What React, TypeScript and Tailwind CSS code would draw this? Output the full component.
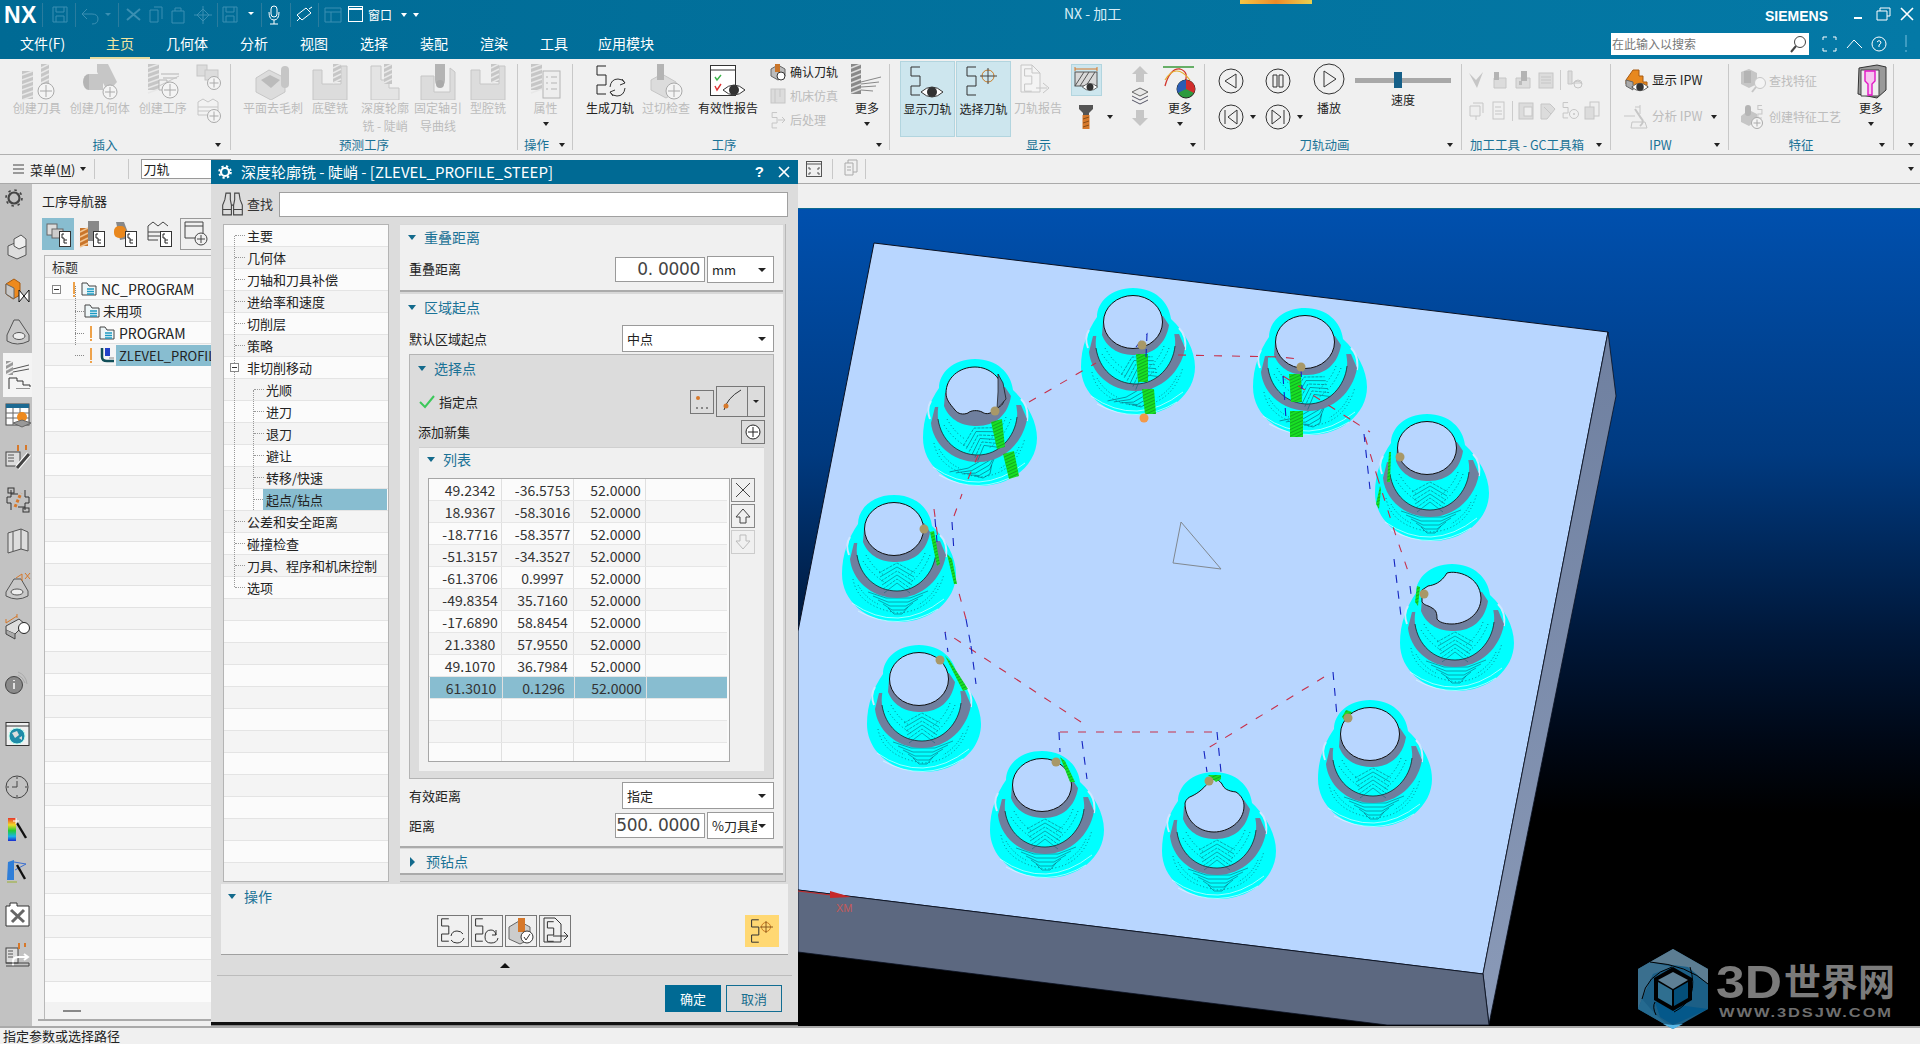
import React from "react";

const G = "#c6c6c6";
const GD = "#b4b4b4";
const GL = "#dcdcdc";

function S({ w = 32, h = 32, vb, children, className = "" }: any) {
  return (
    <svg width={w} height={h} viewBox={vb || `0 0 ${w} ${h}`} fill="none" className={"block shrink-0 " + className}>
      {children}
    </svg>
  );
}

const Caret = ({ dark = "border-t-[#222]" }: any) => (
  <span className={"inline-block w-0 h-0 border-x-[3px] border-x-transparent border-t-[4px] " + dark} />
);

const Tp = ({ x = 0, y = 0, c = "#333", k = 1 }: any) => (
  <path transform={`translate(${x} ${y}) scale(${k})`} d="M11 1H2V10H11V20H2V29H11" stroke={c} strokeWidth={1 / k} fill="none" />
);
const Plus = ({ cx, cy, r = 7, c = "#aaa" }: any) => (
  <g>
    <circle cx={cx} cy={cy} r={r} fill="#f4f4f4" stroke={c} />
    <path d={`M${cx - r + 2} ${cy}H${cx + r - 2}M${cx} ${cy - r + 2}V${cy + r - 2}`} stroke={c} />
  </g>
);
const Eye = ({ cx, cy, c = "#333", k = 1 }: any) => (
  <g transform={`translate(${cx} ${cy}) scale(${k})`}>
    <path d="M-11 0Q0 -10 11 0Q0 10 -11 0Z" fill="#fff" stroke={c} />
    <circle r="5" fill={c} />
  </g>
);
const Hatch = ({ x, y, w, h, a = G, b = "#e8e8e8" }: any) => {
  const ls = [];
  for (let i = 0; i < h; i += 5) ls.push(<path key={i} d={`M${x} ${y + i + 4}L${x + w} ${y + i}`} stroke={b} strokeWidth="1.5" />);
  return (
    <g>
      <rect x={x} y={y} width={w} height={h} fill={a} />
      {ls}
    </g>
  );
};
const Step = ({ x = 0, y = 0, c = GD, fill = "#e4e4e4" }: any) => (
  <path transform={`translate(${x} ${y})`} d="M1 1H11V15H19V23H29V35H1Z" fill={fill} stroke={c} />
);

/* ---------- Title bar ---------- */
function Qat() {
  const c = "#3a8fb2";
  return (
    <div className="flex items-center h-[30px] text-white">
      <div className="w-[42px] pl-[4px] text-[23px] font-bold leading-none font-['Liberation_Sans',sans-serif] tracking-[0.5px]">NX</div>
      <svg width="372" height="30" viewBox="42 0 372 30" fill="none" className="block shrink-0">
        <g stroke={c}>
          <path d="M42.5 3V27M75.5 3V27M118.5 3V27M217.5 3V27M261.5 3V27M290.5 3V27M318.5 3V27" stroke="#2a7c9e" />
          <path d="M53 7H67V22H53ZM56 7V12H64V7M56 22V16H64V22" />
          <path d="M82 14H92Q98 14 98 19Q98 24 92 24M82 14L87 9M82 14L87 19" />
          <path d="M127 20L140 9M127 9L140 20" strokeWidth="2" />
          <path d="M150 10H158V22H150ZM154 7H162V19" />
          <path d="M172 11H184V23H172ZM175 11V8H181V11" />
          <path d="M197 15L203 9L209 15L203 21ZM203 6V24M194 15H212" />
          <path d="M223 7H237V22H223ZM226 7V12H234V7M226 22V16H234V22" />
        </g>
        <path d="M105 13H111L108 16Z" fill={c} />
        <path d="M248 12H254L251 15Z" fill="#fff" />
        <g stroke="#fff">
          <rect x="271" y="6" width="6" height="11" rx="3" />
          <path d="M269 12Q269 20 274 20Q279 20 279 12M274 20V24M270 24H278" />
          <path d="M297 15L306 8L311 13L302 20ZM300 18L297 21M309 9L312 7" />
        </g>
        <path d="M325 8H341V22H325ZM325 12H341M331 12V22" stroke={c} />
        <rect x="348.5" y="6.5" width="14" height="15" stroke="#fff" />
        <path d="M349 9H362" stroke="#fff" strokeWidth="2" />
      </svg>
    </div>
  );
}

function TitleBar() {
  const tabs = ["视图", "选择", "装配", "渲染", "工具"];
  return (
    <div className="relative h-[59px] shrink-0 bg-linear-to-r from-[#006a94] to-[#0479a6] text-white">
      <div className="flex items-start justify-between h-[30px]">
        <div className="flex items-center">
          <Qat />
          <span className="-ml-[46px] text-[12px] leading-none">窗口</span>
          <span className="ml-[9px] flex"><Caret dark="border-t-white" /></span>
          <span className="ml-[6px] flex"><Caret dark="border-t-white" /></span>
        </div>
        <div className="absolute left-[1064px] top-[3px] text-[14px] leading-[20px] text-[#d8eef7] whitespace-pre">NX - 加工</div>
        <div className="absolute left-[1240px] top-0 w-[72px] h-[4px] bg-linear-to-r from-[#f6c644] via-[#ee8a28] to-[#e8d050]" />
        <div className="flex items-center h-[30px]">
          <span className="text-[14px] font-bold font-['Liberation_Sans',sans-serif] mt-[2px]">SIEMENS</span>
          <svg width="92" height="30" viewBox="0 0 92 30" fill="none" className="block">
            <path d="M26 18H34" stroke="#fff" strokeWidth="2" />
            <path d="M49 11H59V20H49ZM52 11V8H62V16H59" stroke="#fff" />
            <path d="M73 8L85 20M85 8L73 20" stroke="#fff" strokeWidth="1.6" />
          </svg>
        </div>
      </div>
      <div className="flex items-center h-[29px] justify-between -mt-[1px]">
        <div className="flex items-center text-[14px] leading-[29px]">
          <div className="w-[90px] pl-[20px]">文件(F)</div>
          <div className="relative w-[60px] text-center text-[#f2e6a0]">
            主页
            <div className="absolute left-0 right-0 -bottom-[1px] h-[2px] bg-[#e6dca0]" />
          </div>
          <div className="w-[74px] text-center">几何体</div>
          <div className="w-[60px] text-center">分析</div>
          {tabs.map((t) => (
            <div key={t} className="w-[60px] text-center">{t}</div>
          ))}
          <div className="ml-[14px]">应用模块</div>
        </div>
        <div className="flex items-center">
          <div className="flex items-center justify-between w-[198px] h-[22px] bg-white pl-[1px] pr-[2px] text-[12px] text-[#777]">
            <span>在此输入以搜索</span>
            <svg width="18" height="20" viewBox="0 0 18 20" fill="none" className="block">
              <circle cx="11" cy="8" r="5.5" stroke="#444" />
              <path d="M7 12L2 18" stroke="#444" strokeWidth="2" />
            </svg>
          </div>
          <svg width="111" height="24" viewBox="1809 31 111 24" fill="none" className="block">
            <path d="M1823 39V36H1827M1833 36H1836V39M1836 47V50H1833M1827 50H1823V47" stroke="#fff" />
            <path d="M1847 47L1854 39L1862 47" stroke="#fff" />
            <circle cx="1879" cy="43" r="7" stroke="#fff" />
            <path d="M1877 41Q1879 38 1881 41Q1881 43 1879 44V46" stroke="#fff" />
            <path d="M1906 34V46M1906 49V51" stroke="#3d9cc2" strokeWidth="2" />
          </svg>
        </div>
      </div>
    </div>
  );
}

/* ---------- Ribbon ---------- */
function Group({ w, label, lc = "", caret = true, children, className = "", caretRight = 8 }: any) {
  return (
    <div className={"relative shrink-0 h-[86px] my-[5px] border-r border-[#c8c8c8] " + className} style={{ width: w }}>
      <div className="flex h-[72px]">{children}</div>
      <div className={"h-[18px] text-[12.5px] leading-[18px] text-center text-[#1a7296] whitespace-pre " + lc}>{label}</div>
      {caret && (
        <span className="absolute top-[79px] flex" style={{ right: caretRight }}>
          <Caret />
        </span>
      )}
    </div>
  );
}

function Big({ w, label, l2, icon, off = false, caret = false, className = "" }: any) {
  return (
    <div className={"flex flex-col items-center shrink-0 " + className} style={{ width: w }}>
      <div className="h-[35px] flex items-start justify-center">{icon}</div>
      <div className={"text-[12px] leading-[18px] whitespace-nowrap " + (off ? "text-[#bcbcbc]" : "text-[#222]")}>{label}</div>
      {l2 && <div className={"text-[12px] leading-[17px] whitespace-nowrap " + (off ? "text-[#bcbcbc]" : "text-[#222]")}>{l2}</div>}
      {caret && <div className="flex h-[14px] items-center"><Caret /></div>}
    </div>
  );
}

const IconCreateTool = (
  <S w={36} h={36}>
    <Hatch x={3} y={7} w={11} h={28} />
    <Hatch x={22} y={0} w={8} h={24} />
    <Plus cx={27} cy={27} r={8} />
  </S>
);
const IconCreateGeom = (
  <S w={36} h={36}>
    <path d="M15 0L26 0L35 18L26 28L15 8Z" fill={G} />
    <ellipse cx="7" cy="18" rx="6" ry="8" fill={GD} />
    <rect x="7" y="10" width="14" height="16" fill={G} />
    <Plus cx={28} cy={28} r={7} />
  </S>
);
const IconCreateOp = (
  <S w={36} h={36}>
    <Hatch x={3} y={0} w={11} h={26} />
    <path d="M14 16H22V26H14ZM16 10H34M18 14H32" stroke={GD} />
    <path d="M14 22L34 12" stroke={G} />
    <Plus cx={25} cy={26} r={8} />
  </S>
);
const IconDeburr = (
  <S w={36} h={36}>
    <path d="M1 14L14 6L30 14V28L16 36L1 28Z" fill={GL} stroke={G} />
    <path d="M6 16L15 11L25 16L16 24Z" fill="#bbb" />
    <rect x="26" y="2" width="8" height="22" rx="4" fill={G} />
  </S>
);
const IconFloor = (
  <S w={36} h={36}>
    <path d="M1 6H10V20H29V2H35V36H1Z" fill={GL} stroke={G} />
    <Hatch x={21} y={0} w={8} h={18} />
  </S>
);
const IconZlevel = (
  <S w={36} h={36}>
    <Step x={3} y={1} c={G} />
    <Hatch x={17} y={0} w={8} h={20} />
  </S>
);
const IconGuide = (
  <S w={36} h={36}>
    <path d="M1 12H14V28H30V4L35 8V36H1Z" fill={GL} stroke={G} />
    <path d="M15 0V16Q15 22 20 22Q25 22 25 16V0Z" fill={GD} />
    <circle cx="20" cy="20" r="4" fill="#aaa" />
  </S>
);
const IconProps = (
  <S w={36} h={36}>
    <Hatch x={3} y={0} w={11} h={26} />
    <rect x="15" y="7" width="17" height="27" fill="#eee" stroke={GD} />
    <path d="M18 13H20M23 13H29M18 19H20M23 19H29M18 25H20M23 25H29" stroke={GD} />
  </S>
);
const IconGen = (
  <S w={36} h={36}>
    <Tp x={3} y={1} c="#222" />
    <path d="M18 23Q19 15 26 15Q31 15 33 19M33 24Q32 32 25 32Q20 32 18 28" stroke="#333" />
    <path d="M30 15L33 19L28 21M21 32L18 28L23 26" stroke="#333" />
  </S>
);
const IconGouge = (
  <S w={36} h={36}>
    <path d="M3 16L14 10L28 18V28L18 34L3 26Z" fill={GL} stroke={G} />
    <rect x="9" y="0" width="7" height="16" fill={GD} />
    <Plus cx={26} cy={27} r={8} />
  </S>
);
const IconValid = (
  <S w={36} h={36}>
    <rect x="0.5" y="1.5" width="25" height="30" stroke="#333" fill="#fff" />
    <path d="M1 6H25" stroke="#333" />
    <path d="M5 13L7 16L11 11" stroke="#3cb34a" strokeWidth="1.4" />
    <path d="M5 22L7 26L11 20" stroke="#d33" strokeWidth="1.4" />
    <Eye cx={24} cy={26} />
  </S>
);
const IconMoreMill = (
  <S w={36} h={36}>
    <Hatch x={2} y={0} w={10} h={30} a="#888" b="#ddd" />
    <path d="M12 18L32 13M12 20L30 18M12 23L27 22M12 26L24 27" stroke="#888" />
  </S>
);
const IconShow = (
  <S w={36} h={36}>
    <Tp x={0} y={1} />
    <Eye cx={23} cy={27} />
  </S>
);
const IconSelect = (
  <S w={36} h={36}>
    <Tp x={0} y={1} />
    <circle cx="23" cy="11" r="6" stroke="#c97b25" />
    <path d="M15 11H32M23 3V19" stroke="#444" />
  </S>
);
const IconReport = (
  <S w={36} h={36}>
    <path d="M1 1H12L20 9V28H1Z" fill="#f4f4f4" stroke={G} />
    <path d="M12 1V9H20" stroke={G} />
    <Tp x={3} y={4} c={G} k={0.8} />
    <path d="M16 24H27M23 19L29 24L23 29" stroke={G} />
  </S>
);
const IconTool = (
  <S w={16} h={26}>
    <path d="M1 1H15V5L11 9V12H5V9L1 5Z" fill="#555" />
    <rect x="4.5" y="11" width="7" height="14" fill="#d6782a" />
    <path d="M5 15L11 13M5 19L11 17M5 23L11 21" stroke="#8b4d16" />
  </S>
);
const IconCut = (
  <S w={28} h={28}>
    <rect x="3" y="6" width="22" height="14" fill="#d8d8d8" stroke="#555" />
    <path d="M3 20L12 6M8 20L17 6M14 20L23 6" stroke="#555" />
    <path d="M3 3H25M3 1V5M25 1V5" stroke="#d6782a" />
    <Eye cx={18} cy={21} k={0.7} />
  </S>
);
const IconMoreColor = (
  <S w={36} h={36}>
    <path d="M1 3H32" stroke="#3a9a3a" strokeWidth="1.5" />
    <path d="M3 22Q8 4 18 5Q28 8 22 20" stroke="#d2342c" strokeWidth="1.3" />
    <path d="M3 16Q14 -2 28 16" stroke="#e6b030" strokeWidth="1.2" />
    <circle cx="24" cy="25" r="9" fill="#2c9a3e" stroke="#222" />
    <path d="M24 25V16A9 9 0 0 1 32 29Z" fill="#d22d2d" />
    <path d="M24 25L16 29A9 9 0 0 1 24 16Z" fill="#2b5db5" />
  </S>
);
const Circ = ({ r = 12, kind }: any) => {
  const c = r + 1;
  return (
    <S w={c * 2} h={c * 2}>
      <circle cx={c} cy={c} r={r} stroke="#333" />
      {kind === "prev" && <path d={`M${c + 5} ${c - 7}V${c + 7}L${c - 6} ${c}Z`} stroke="#333" />}
      {kind === "pause" && <path d={`M${c - 5} ${c - 6}H${c - 1}V${c + 6}H${c - 5}ZM${c + 1} ${c - 6}H${c + 5}V${c + 6}H${c + 1}Z`} stroke="#333" />}
      {kind === "first" && <path d={`M${c + 6} ${c - 7}V${c + 7}L${c - 3} ${c}ZM${c - 6} ${c - 7}V${c + 7}`} stroke="#333" />}
      {kind === "last" && <path d={`M${c - 6} ${c - 7}V${c + 7}L${c + 3} ${c}ZM${c + 6} ${c - 7}V${c + 7}`} stroke="#333" />}
      {kind === "play" && <path d={`M${c - 5} ${c - 8}V${c + 8}L${c + 7} ${c}Z`} stroke="#333" />}
    </S>
  );
};
const SmallGray = ({ v }: any) => (
  <S w={18} h={20}>
    {v === 0 && <path d="M1 3L8 10L15 2L9 18Z" fill={G} />}
    {v === 1 && <g><path d="M3 8H15V18H3Z" fill={GL} stroke={G} /><rect x="3" y="2" width="5" height="8" fill={GD} /></g>}
    {v === 2 && <g><path d="M2 8H16V18H2Z" fill={GL} stroke={G} /><rect x="7" y="1" width="6" height="10" fill={GD} /><path d="M5 11H8V15H5Z" fill="#bbb" /></g>}
    {v === 3 && <g><rect x="2" y="3" width="14" height="15" fill={GL} stroke={G} /><path d="M4 7H14M4 10H14M4 13H14" stroke={G} /></g>}
    {v === 4 && <g><path d="M2 1H6V14H2ZM6 14Q12 8 16 14" fill={GL} stroke={G} /><circle cx="12" cy="14" r="4" stroke={G} /></g>}
    {v === 5 && <g><path d="M2 5H12V15H2ZM5 2H15V12" stroke={G} fill="#eee" /><path d="M8 15V19" stroke={G} /></g>}
    {v === 6 && <g><rect x="3" y="1" width="11" height="17" fill="#f0f0f0" stroke={G} /><path d="M5 6H11M5 10H12M5 13H12" stroke={G} /></g>}
    {v === 7 && <g><rect x="2" y="2" width="14" height="16" fill={GL} stroke={G} /><rect x="7" y="6" width="8" height="9" fill="#eee" stroke={G} /></g>}
    {v === 8 && <g><path d="M2 3H11L16 8L8 18H2Z" fill={GL} stroke={G} /><path d="M5 6L12 13" stroke={G} /></g>}
    {v === 9 && <g><Tp x={1} y={1} c={G} k={0.55} /><circle cx="13" cy="13" r="4.5" stroke={G} /><circle cx="13" cy="13" r="1" fill={G} /></g>}
    {v === 10 && <g><rect x="7" y="1" width="9" height="14" fill="#eee" stroke={G} /><rect x="2" y="6" width="9" height="12" fill={GL} stroke={G} /></g>}
  </S>
);

function Ribbon() {
  return (
    <div className="flex h-[96px] shrink-0 bg-[#f0f0f0] border-b border-[#b0b0b0] overflow-hidden">
      <Group w={231} label="插入" lc="pr-[20px]" caretRight={9}>
        <div className="w-[7px]" />
        <Big w={60} off label="创建刀具" icon={IconCreateTool} />
        <Big w={66} off label="创建几何体" icon={IconCreateGeom} />
        <Big w={60} off label="创建工序" icon={IconCreateOp} />
        <div className="w-[38px] flex flex-col gap-[6px] pl-[3px]">
          <S w={26} h={27}>
            <rect x="1" y="1" width="10" height="11" fill={GL} stroke={G} />
            <rect x="9" y="6" width="13" height="10" fill={GL} stroke={G} />
            <Plus cx={18} cy={19} r={6.5} />
          </S>
          <S w={26} h={27}>
            <path d="M2 5L7 2L12 5L17 2L22 5V18H2Z" fill="#f2f2f2" stroke={G} />
            <path d="M2 10H22M2 14H22" stroke={G} />
            <Plus cx={18} cy={19} r={6.5} />
          </S>
        </div>
      </Group>
      <Group w={287} label="预测工序" lc="pr-[20px]" caret={false}>
        <div className="w-[12px]" />
        <Big w={60} off label="平面去毛刺" icon={IconDeburr} />
        <Big w={54} off label="底壁铣" icon={IconFloor} />
        <Big w={56} off label="深度轮廓" l2="铣 - 陡峭" icon={IconZlevel} />
        <Big w={50} off label="固定轴引" l2="导曲线" icon={IconGuide} />
        <Big w={50} off label="型腔铣" icon={IconFloor} />
      </Group>
      <Group w={55} label="操作" lc="pr-[17px]" caretRight={7}>
        <div className="w-[2px]" />
        <Big w={55} off label="属性" icon={IconProps} caret />
      </Group>
      <Group w={317} label="工序" lc="pr-[14px]" caretRight={7}>
        <div className="w-[8px]" />
        <Big w={58} label="生成刀轨" icon={IconGen} />
        <Big w={54} off label="过切检查" icon={IconGouge} />
        <Big w={70} label="有效性报告" icon={IconValid} />
        <div className="w-[87px] pl-[6px] text-[12px] leading-[24px] -mt-[4px]">
          <div className="flex items-center gap-[3px] text-[#222]">
            <S w={18} h={18}>
              <path d="M2 6L9 2L16 6V13L9 17L2 13Z" fill="#bbb" stroke="#666" />
              <rect x="6" y="1" width="5" height="8" fill="#c9752a" />
              <circle cx="12" cy="13" r="4" fill="#fff" stroke="#333" />
            </S>
            确认刀轨
          </div>
          <div className="flex items-center gap-[3px] text-[#bcbcbc]">
            <S w={18} h={18}>
              <rect x="2" y="2" width="14" height="14" fill={GL} stroke={G} />
              <path d="M6 2V16M11 2V10" stroke={G} />
            </S>
            机床仿真
          </div>
          <div className="flex items-center gap-[3px] text-[#bcbcbc]">
            <S w={18} h={18}>
              <Tp x={2} y={1} c={G} k={0.55} />
              <path d="M9 9H16M13 6L16 9L13 12" stroke={G} />
            </S>
            后处理
          </div>
        </div>
        <Big w={34} label="更多" icon={IconMoreMill} caret />
      </Group>
      <Group w={315} label="显示" lc="pr-[17px]" caretRight={8}>
        <div className="w-[10px]" />
        <div className="flex -mt-[3px] h-[76px] gap-[1px]">
          <div className="w-[55px] h-[76px] bg-[#cde6ee] border border-[#b2d5df] flex flex-col items-center pt-[3px]">
            <Big w={53} label="显示刀轨" icon={IconShow} />
          </div>
          <div className="w-[55px] h-[76px] bg-[#cde6ee] border border-[#b2d5df] flex flex-col items-center pt-[3px]">
            <Big w={53} label="选择刀轨" icon={IconSelect} />
          </div>
        </div>
        <Big w={54} off label="刀轨报告" icon={IconReport} />
        <div className="w-[60px] pl-[6px] flex flex-col">
          <div className="w-[31px] h-[32px] bg-[#cde6ee] border border-[#b2d5df] flex items-center justify-center">{IconCut}</div>
          <div className="flex items-center mt-[8px]">
            <div className="w-[31px] flex justify-center">{IconTool}</div>
            <span className="ml-[5px] flex"><Caret /></span>
          </div>
        </div>
        <div className="w-[32px] flex flex-col items-center gap-[4px] pt-[1px]">
          <S w={18} h={18}>
            <path d="M9 1L17 9H13V17H5V9H1Z" fill={G} />
          </S>
          <S w={18} h={18}>
            <path d="M9 1L17 5L9 9L1 5Z" fill="#e8e8e8" stroke="#666" />
            <path d="M1 9L9 13L17 9M1 13L9 17L17 13" stroke="#556" />
          </S>
          <S w={18} h={18}>
            <path d="M5 1H13V9H17L9 17L1 9H5Z" fill={G} />
          </S>
        </div>
        <Big w={48} label="更多" icon={IconMoreColor} caret />
      </Group>
      <Group w={257} label="刀轨动画" lc="pr-[17px]" caretRight={8}>
        <div className="w-[2px]" />
        <div className="grid grid-cols-[47px_47px] grid-rows-[36px_36px] -mt-[1px]">
          <div className="flex justify-center items-center"><Circ kind="prev" /></div>
          <div className="flex justify-center items-center"><Circ kind="pause" /></div>
          <div className="relative flex justify-center items-center"><Circ kind="first" /><span className="absolute -right-[2px] top-[16px] flex"><Caret /></span></div>
          <div className="relative flex justify-center items-center"><Circ kind="last" /><span className="absolute -right-[2px] top-[16px] flex"><Caret /></span></div>
        </div>
        <Big w={56} label="播放" icon={<div className="-mt-[1px]"><Circ r={15} kind="play" /></div>} />
        <div className="w-[96px] -ml-[2px] flex flex-col items-center">
          <div className="relative w-full h-[5px] bg-[#a8a8a8] mt-[14px]">
            <div className="absolute left-[39px] -top-[6px] w-[8px] h-[16px] bg-[#155f88]" />
          </div>
          <div className="text-[12px] leading-[18px] mt-[8px] text-[#222]">速度</div>
        </div>
      </Group>
      <Group w={149} label="加工工具 - GC工具箱" lc="pr-[18px] text-[12.5px]" caretRight={8}>
        <div className="flex flex-col pl-[6px] pt-[6px] gap-[11px]">
          <div className="flex gap-[5px] items-center">
            {[0, 1, 2, 3].map((v) => <SmallGray key={v} v={v} />)}
            <div className="w-px h-[20px] bg-[#ccc]" />
            <SmallGray v={4} />
          </div>
          <div className="flex gap-[4px] items-center">
            <SmallGray v={5} />
            <SmallGray v={6} />
            <div className="w-px h-[20px] bg-[#ccc]" />
            <SmallGray v={7} />
            <SmallGray v={8} />
            <SmallGray v={9} />
            <SmallGray v={10} />
          </div>
        </div>
      </Group>
      <Group w={118} label="IPW" lc="pr-[18px]" caretRight={8}>
        <div className="flex flex-col pl-[12px] pt-[4px] gap-[11px] text-[12.5px] whitespace-nowrap">
          <div className="flex items-center gap-[3px] text-[#222] h-[25px]">
            <S w={26} h={25}>
              <path d="M3 12L10 2H16V8H20V14H24V20L10 20L3 16Z" fill="#e8881e" stroke="#a85a10" />
              <path d="M3 12V18L10 22V14Z" fill="#aaa" stroke="#666" />
              <Eye cx={17} cy={19} k={0.75} />
            </S>
            显示 IPW
          </div>
          <div className="flex items-center gap-[3px] text-[#bcbcbc] h-[25px]">
            <S w={26} h={25}>
              <path d="M1 12H12M12 3H17M17 1V10M9 18H22L24 24H8Z" stroke={G} />
              <path d="M12 5L18 14Q22 18 17 22" stroke={G} strokeWidth="2" />
            </S>
            分析 IPW
            <span className="ml-[6px] flex"><Caret /></span>
          </div>
        </div>
      </Group>
      <Group w={165} label="特征" lc="pr-[20px]" caretRight={8}>
        <div className="w-[120px] flex flex-col pl-[10px] pt-[4px] gap-[11px] text-[12px] text-[#bcbcbc]">
          <div className="flex items-center gap-[2px] h-[25px]">
            <S w={28} h={25}>
              <path d="M2 4L10 1L18 5V16L10 20L2 16Z" fill={G} />
              <rect x="5" y="3" width="7" height="12" fill={GD} />
              <circle cx="21" cy="15" r="5.5" fill="#f4f4f4" stroke={G} />
              <path d="M17 19L13 24" stroke={G} strokeWidth="2" />
            </S>
            查找特征
          </div>
          <div className="flex items-center gap-[2px] h-[25px] whitespace-nowrap">
            <S w={28} h={25}>
              <path d="M2 12L10 6L18 10V16L10 22L2 18Z" fill={G} />
              <rect x="6" y="1" width="6" height="11" rx="3" fill={GD} />
              <Tp x={18} y={1} c={G} k={0.45} />
              <Plus cx={18} cy={19} r={5.5} />
            </S>
            创建特征工艺
          </div>
        </div>
        <Big w={44} label="更多" caret icon={
          <S w={32} h={36}>
            <path d="M4 4L22 1L31 3V26L22 34L3 30Z" fill="#999" stroke="#333" />
            <path d="M6 6H24V32H6Z" fill="#eee" stroke="#444" />
            <path d="M10 7H20V17L17 20V31H13V20L10 17Z" fill="#f7c4ef" stroke="#e216c6" strokeWidth="1.4" />
          </S>
        } />
      </Group>
      <div className="relative flex-1">
        <span className="absolute left-[14px] top-[84px] flex"><Caret /></span>
      </div>
    </div>
  );
}

function Toolbar() {
  return (
    <div className="flex items-center h-[29px] shrink-0 bg-[#f0f0f0] border-b border-[#aaa] text-[13px] text-[#222]">
      <svg width="11" height="10" viewBox="0 0 11 10" className="block ml-[13px]"><path d="M0 1H11M0 5H11M0 9H11" stroke="#444" /></svg>
      <span className="ml-[6px] leading-none">菜单(<span className="underline">M</span>)</span>
      <span className="ml-[5px] flex"><Caret /></span>
      <div className="ml-[8px] w-px h-[20px] bg-[#c8c8c8]" />
      <div className="ml-[33px] w-px h-[20px] bg-[#c8c8c8]" />
      <div className="ml-[12px] w-[90px] h-[20px] bg-white border border-[#999] text-[13px] leading-[18px] pl-[1px]">刀轨</div>
      <svg width="90" height="24" viewBox="805 160 90 24" fill="none" className="block ml-[572px]">
        <rect x="808.5" y="164.5" width="15" height="15" stroke="#555" />
        <path d="M808 167H823M811 170V172H813M821 170V172H819M811 178V176H813M821 178V176H819" stroke="#555" />
        <path d="M834.5 162V182M867.5 162V182" stroke="#c8c8c8" />
        <path d="M847 166H855V178H847ZM850 166V163H859V175H855M849 170H853M849 173H853" stroke="#aaa" />
      </svg>
      <span className="ml-auto mr-[6px] flex"><Caret /></span>
    </div>
  );
}

/* ---------- Left rail ---------- */
const railIcons: [number, React.ReactNode][] = [
  [-1, <S w={20} h={20} className="ml-[4px]"><circle cx="10" cy="10" r="5.5" stroke="#444" strokeWidth="2.2" /><circle cx="10" cy="10" r="8" stroke="#444" strokeWidth="1.6" strokeDasharray="2.5 3.8" /></S>],
  [19, <S w={22} h={26} className="ml-[6px]"><path d="M2 12L11 8L20 12V21L11 25L2 21Z" fill="#ddd" stroke="#555" /><path d="M8 5L15 1L20 5V12L13 15L8 12Z" fill="#eee" stroke="#555" /></S>],
  [14, <S w={26} h={26} className="ml-[5px]"><path d="M1 6L9 1L15 5V17L8 21L1 16Z" fill="#ee8a1e" stroke="#a85b10" /><path d="M1 6L9 10V21L1 16Z" fill="#c7c7c7" stroke="#666" /><path d="M14 12V24L24 12V24Z" fill="#fff" stroke="#111" /></S>],
  [11, <S w={26} h={26} className="ml-[5px]"><path d="M2 16L9 1H14L24 16V22Q12 28 2 22Z" fill="#c8c8c8" stroke="#555" /><ellipse cx="14" cy="17" rx="6" ry="3.5" fill="#eee" stroke="#555" /></S>],
  [6, <S w={26} h={28} className="ml-[2px]"><Hatch x={1} y={0} w={7} h={14} a="#999" b="#eee" /><path d="M8 8L24 4M8 11L24 8" stroke="#555" /><path d="M4 17H12V20H18V24H25V26M4 17V28M11 28H25" stroke="#333" /></S>],
  [4, <S w={26} h={26} className="ml-[5px]"><rect x="1" y="1" width="23" height="21" fill="#fff" stroke="#444" /><rect x="1" y="1" width="23" height="4" fill="#1d6a92" /><path d="M1 10H24M1 15H24M8 5V22M15 5V22" stroke="#666" /><circle cx="17" cy="14" r="5" fill="#ee8a1e" /><path d="M8 20L17 24L26 20L17 17Z" fill="#999" stroke="#666" /></S>],
  [11, <S w={26} h={26} className="ml-[5px]"><rect x="1" y="8" width="14" height="14" fill="#ddd" stroke="#444" /><path d="M3 11H9M3 14H9M3 17H9" stroke="#555" /><path d="M13 1V7M21 1V6" stroke="#d6782a" strokeWidth="2" /><path d="M24 10L12 24" stroke="#fff" strokeWidth="5" /><path d="M24 10L12 24" stroke="#444" strokeWidth="3" /></S>],
  [13, <S w={26} h={26} className="ml-[5px]"><path d="M6 3V10H2V16H6V23M20 3V10H24V16H20V23M6 7H13M13 20H20" stroke="#333" /><rect x="3" y="1" width="6" height="5" stroke="#333" /><rect x="18" y="21" width="6" height="4" stroke="#333" /><path d="M10 20L16 6" stroke="#d6782a" strokeWidth="3" strokeDasharray="3 2" /></S>],
  [11, <S w={24} h={26} className="ml-[6px]"><path d="M2 5L15 1V21L2 25ZM15 1L22 4V23L15 21M7 4V23" fill="#ddd" stroke="#555" /></S>],
  [15, <S w={26} h={30} className="ml-[5px]"><path d="M1 21L9 8L16 8L23 20V25Q12 31 1 25Z" fill="#c8c8c8" stroke="#555" /><ellipse cx="12" cy="21" rx="6" ry="3" fill="#eee" stroke="#555" /><path d="M11 7L17 3M17 3V10M20 2L25 8M25 2L20 8" stroke="#d6782a" /></S>],
  [11, <S w={26} h={26} className="ml-[5px]"><path d="M1 12L14 5L20 10L10 20L1 16Z" fill="#ddd" stroke="#444" /><path d="M1 16V20L10 25V20" fill="#aaa" stroke="#444" /><path d="M1 9L12 2M1 5V9M12 0V4" stroke="#d6782a" /><circle cx="19" cy="14" r="5.5" fill="#fff" stroke="#222" /></S>],
  [25, <S w={24} h={26} className="ml-[4px]"><circle cx="10" cy="16" r="8.5" fill="#8a8a8a" stroke="#444" /><path d="M10 14V20M10 11V12" stroke="#fff" strokeWidth="1.5" /><path d="M14 3Q22 6 23 15M14 6Q19 8 21 14" stroke="#aaa" /></S>],
  [22, <S w={26} h={26} className="ml-[5px]"><rect x="1" y="1.5" width="23" height="23" fill="#f0f0f0" stroke="#333" /><path d="M1 5H24" stroke="#333" /><circle cx="12" cy="15" r="8" fill="#1f8ba8" stroke="#bfe" /><path d="M7 12L12 10L14 14L10 17ZM14 17L17 15V19Z" fill="#ddd" /></S>],
  [23, <S w={26} h={26} className="ml-[4px]"><circle cx="13" cy="13" r="11" stroke="#444" /><path d="M13 3V5M13 21V23M3 13H5M21 13H23M13 7V13H8" stroke="#444" /></S>],
  [13, <S w={24} h={26} className="ml-[5px]"><defs><linearGradient id="rb" x1="0" x2="0" y1="0" y2="1"><stop offset="0" stopColor="#e8352a" /><stop offset=".3" stopColor="#f2d92a" /><stop offset=".55" stopColor="#22cc33" /><stop offset=".8" stopColor="#18b4e8" /><stop offset="1" stopColor="#1a2ad0" /></linearGradient></defs><rect x="3" y="1" width="8" height="23" fill="url(#rb)" /><path d="M12 6L21 21" stroke="#111" strokeWidth="2.4" /><path d="M11 1V7M8 4H14" stroke="#fff" /></S>],
  [12, <S w={24} h={26} className="ml-[5px]"><path d="M3 3L9 1V21H2Z" fill="#2f7ed8" /><path d="M9 3L21 5L10 11" stroke="#3b6fd0" /><path d="M12 6L20 20" stroke="#111" strokeWidth="2.4" /><path d="M2 23H12" stroke="#9ab030" /></S>],
  [13, <S w={26} h={26} className="ml-[5px]"><path d="M1 4H5V1H12V4H24V24H1Z" fill="#fff" stroke="#333" /><path d="M6 8L19 20M19 8L7 20" stroke="#666" strokeWidth="3" /></S>],
  [10, <S w={26} h={26} className="ml-[5px]"><rect x="1" y="6" width="12" height="15" fill="#ddd" stroke="#444" /><path d="M3 9H8M3 12H8M3 15H8" stroke="#555" /><path d="M14 1V7M20 1V5" stroke="#d6782a" strokeWidth="2" /><path d="M8 24V19Q8 15 14 15H22M19 12L23 15L19 18" stroke="#fff" strokeWidth="2" /><path d="M1 21H24V24H1" stroke="#444" /></S>],
];

function Rail() {
  return (
    <div className="w-[32px] shrink-0 bg-[#c2c2c2] flex flex-col overflow-hidden">
      {railIcons.map(([mt, ic], i) => (
        <div
          key={i}
          className={"flex items-center shrink-0 " + (i === 4 ? "h-[44px] bg-[#f4f4f4] ml-[3px]" : "h-[30px]")}
          style={{ marginTop: mt }}
        >
          {ic}
        </div>
      ))}
    </div>
  );
}

/* ---------- Navigator ---------- */
const TreeDoc = ({ x, y }: any) => (
  <g transform={`translate(${x} ${y})`}>
    <rect x="0.5" y="0.5" width="11" height="15" fill="#fff" stroke="#333" />
    <path d="M3 3H5M3 7H5V12H8M5 9H8M3 3V7" stroke="#222" />
  </g>
);
const Folder = ({ c = "#1d9ac2" }: any) => (
  <S w={16} h={14}>
    <path d="M1 13V1H6L8 4H15V13Z" fill="#eef6f8" stroke="#444" />
    <path d="M6 7H13M6 9.5H13M6 12H13" stroke={c} strokeWidth="1.4" />
  </S>
);
const Warn = () => (
  <span className="w-[3px] flex flex-col items-center gap-[1px] shrink-0">
    <span className="w-[2px] h-[12px] bg-[#eea24a]" />
    <span className="w-[2px] h-[2px] bg-[#eea24a]" />
  </span>
);
const stripes = Array.from({ length: 33 }, (_, i) => i);

function Navigator() {
  return (
    <div className="w-[766px] shrink-0 bg-[#f0f0f0] flex flex-col overflow-hidden relative">
      <div className="h-[34px] pl-[10px] flex items-center text-[13px] text-[#222]">工序导航器</div>
      <svg width="180" height="32" viewBox="32 218 180 32" fill="none" className="block shrink-0">
        <rect x="42" y="218" width="32" height="32" fill="#88bdd0" />
        <rect x="47" y="224" width="10" height="11" fill="#ddd" stroke="#666" />
        <rect x="52" y="229" width="11" height="9" fill="#ccc" stroke="#666" />
        <TreeDoc x={59} y={231} />
        <Hatch x={80} y={228} w={8} h={18} a="#c9752a" b="#f2c490" />
        <rect x="88" y="221" width="11" height="20" fill="#888" />
        <TreeDoc x={93} y={231} />
        <path d="M116 222H124L130 238L120 240Z" fill="#888" />
        <rect x="114" y="226" width="12" height="12" rx="5" fill="#e9881e" />
        <TreeDoc x={125} y={231} />
        <path d="M148 226L153 222L158 226L163 222L168 226M148 232H168M148 236H164M148 226V240H158" stroke="#444" />
        <TreeDoc x={160} y={231} />
        <rect x="180.5" y="218.5" width="40" height="31" stroke="#999" />
        <path d="M185 222H203V238H185ZM185 226H203" stroke="#444" />
        <circle cx="201" cy="239" r="6" fill="#f0f0f0" stroke="#444" />
        <path d="M197 239H205M201 235V243" stroke="#444" />
      </svg>
      <div className="mt-[5px] ml-[12px] flex-1 mb-[6px] border border-[#b8b8b8] bg-[#fafafa] flex flex-col relative overflow-hidden">
        <div className="h-[22px] shrink-0 pl-[7px] text-[13px] leading-[22px] text-[#333] bg-[#f2f2f2] border-b border-[#d4d4d4]">标题</div>
        <div className="absolute left-[30px] top-[30px] h-[59px] border-l border-dotted border-[#888] z-10" />
        {stripes.map((i) => (
          <div key={i} className={"h-[22px] shrink-0 border-b border-[#e2e2e2] flex items-center pt-[1px] text-[14px] text-[#222] whitespace-nowrap " + (i % 2 ? "bg-[#f5f5f5]" : "bg-[#fbfbfb]")}>
            {i === 0 && (
              <>
                <span className="ml-[7px] w-[9px] h-[9px] border border-[#888] bg-white flex items-center justify-center"><span className="w-[5px] h-px bg-[#333]" /></span>
                <span className="w-[11px]" />
                <Warn />
                <span className="w-[6px]" />
                <Folder />
                <span className="ml-[4px]">NC_PROGRAM</span>
              </>
            )}
            {i === 1 && (
              <>
                <span className="ml-[30px] w-[9px] border-b border-dotted border-[#888]" />
                <Folder />
                <span className="ml-[3px] text-[13px]">未用项</span>
              </>
            )}
            {i === 2 && (
              <>
                <span className="ml-[30px] w-[9px] border-b border-dotted border-[#888]" />
                <span className="w-[5px]" />
                <Warn />
                <span className="w-[7px]" />
                <Folder />
                <span className="ml-[4px]">PROGRAM</span>
              </>
            )}
            {i === 3 && (
              <>
                <span className="ml-[30px] w-[9px] border-b border-dotted border-[#888]" />
                <span className="w-[5px]" />
                <Warn />
                <span className="w-[8px]" />
                <S w={15} h={16}>
                  <path d="M2 1V10Q2 14 7 14H14" stroke="#114e58" strokeWidth="2.5" />
                  <rect x="5" y="1" width="5" height="8" fill="#2340c8" />
                  <path d="M9 11H14" stroke="#888" />
                </S>
                <span className="ml-[1px] h-[21px] bg-[#88bdd0] pl-[3px] leading-[21px] w-[200px] text-[13px]">ZLEVEL_PROFILE_STEEP</span>
              </>
            )}
          </div>
        ))}
        <div className="absolute left-0 right-0 bottom-0 h-[17px] bg-[#f2f2f2] pl-[18px] flex items-center">
          <span className="w-[18px] h-[2px] bg-[#888]" />
        </div>
      </div>
      <div className="ml-[6px] h-[7px] border-t-2 border-[#aaa] absolute left-0 right-0 bottom-0" />
    </div>
  );
}

/* ---------- Dialog ---------- */
const Tri = ({ open = true }: any) =>
  open ? (
    <span className="w-0 h-0 border-x-[4px] border-x-transparent border-t-[5px] border-t-[#136a8c]" />
  ) : (
    <span className="w-0 h-0 border-y-[5px] border-y-transparent border-l-[5px] border-l-[#136a8c]" />
  );
const SecHead = ({ label, h = 26, pl = 8, open = true, gap = 8 }: any) => (
  <div className="flex items-center text-[14px] text-[#1a7296]" style={{ height: h, paddingLeft: pl, gap }}>
    <Tri open={open} />
    {label}
  </div>
);
const Select = ({ v, w, h = 27 }: any) => (
  <div className="flex items-center justify-between bg-white border border-[#9a9a9a] pl-[4px] pr-[7px] text-[13px] text-[#222] overflow-hidden whitespace-nowrap" style={{ width: w, height: h }}>
    <span className="overflow-hidden">{v}</span>
    <span className="shrink-0 flex ml-[1px]"><span className="w-0 h-0 border-x-[4px] border-x-transparent border-t-[4px] border-t-[#222]" /></span>
  </div>
);
const NumBox = ({ v }: any) => (
  <div className="w-[90px] h-[25px] bg-white border border-[#9a9a9a] flex items-center justify-end pr-[4px] text-[17px] leading-none text-[#444] font-['DejaVu_Sans',sans-serif] whitespace-pre tracking-[-0.3px]">{v}</div>
);

const treeItems: [string, number][] = [
  ["主要", 0], ["几何体", 0], ["刀轴和刀具补偿", 0], ["进给率和速度", 0], ["切削层", 0], ["策略", 0],
  ["非切削移动", 2], ["光顺", 1], ["进刀", 1], ["退刀", 1], ["避让", 1], ["转移/快速", 1], ["起点/钻点", 3],
  ["公差和安全距离", 0], ["碰撞检查", 0], ["刀具、程序和机床控制", 0], ["选项", 0],
  ["", 9], ["", 9], ["", 9], ["", 9], ["", 9], ["", 9], ["", 9], ["", 9], ["", 9], ["", 9], ["", 9], ["", 9], ["", 9],
];
const table = [
  ["49.2342", "-36.5753"], ["18.9367", "-58.3016"], ["-18.7716", "-58.3577"], ["-51.3157", "-34.3527"],
  ["-61.3706", "0.9997"], ["-49.8354", "35.7160"], ["-17.6890", "58.8454"], ["21.3380", "57.9550"],
  ["49.1070", "36.7984"], ["61.3010", "0.1296"], ["", ""], ["", ""], ["", ""],
];

function TreeList() {
  return (
    <div className="w-[166px] ml-[12px] h-[658px] border border-[#b4b4b4] bg-[#fafafa] overflow-hidden relative">
      <div className="absolute left-[10px] top-[11px] h-[351px] border-l border-dotted border-[#999] z-10" />
      <div className="absolute left-[29px] top-[165px] h-[120px] border-l border-dotted border-[#999] z-10" />
      {treeItems.map(([t, l], i) => (
        <div key={i} className={"h-[22px] shrink-0 flex items-center border-b border-[#e4e4e4] text-[13px] text-[#222] relative " + (i % 2 ? "bg-[#f4f4f4]" : "bg-[#fbfbfb]")}>
          {l === 0 && <><span className="ml-[11px] w-[10px] border-b border-dotted border-[#999]" /><span className="ml-[2px]">{t}</span></>}
          {l === 2 && <><span className="ml-[6px] w-[9px] h-[9px] border border-[#888] bg-white flex items-center justify-center z-20"><span className="w-[5px] h-px bg-[#333]" /></span><span className="w-[8px]" /><span className="ml-[0px]">{t}</span></>}
          {l === 1 && <><span className="ml-[30px] w-[10px] border-b border-dotted border-[#999]" /><span className="ml-[2px]">{t}</span></>}
          {l === 3 && <><span className="ml-[30px] w-[9px] border-b border-dotted border-[#999]" /><span className="h-[21px] bg-[#88bdd0] flex-1 pl-[3px] mr-[1px] leading-[21px]">{t}</span></>}
        </div>
      ))}
    </div>
  );
}

function Dialog() {
  return (
    <div className="absolute left-[211px] top-[160px] w-[587px] h-[865px] bg-[#dcdcdc] flex flex-col z-20 border-b-[3px] border-[#111] shadow-[0_1px_0_#888]">
      <div className="h-[24px] shrink-0 flex items-center bg-[#006a94] text-white text-[15px] pl-[7px] pr-0">
        <svg width="14" height="14" viewBox="0 0 14 14" className="block"><circle cx="7" cy="7" r="4" fill="none" stroke="#fff" strokeWidth="2.2" /><circle cx="7" cy="7" r="5.8" fill="none" stroke="#fff" strokeWidth="2" strokeDasharray="2.2 2.4" /></svg>
        <span className="ml-[9px]">深度轮廓铣 - 陡峭 - [ZLEVEL_PROFILE_STEEP]</span>
        <span className="ml-auto font-bold text-[15px] font-['Liberation_Sans',sans-serif]">?</span>
        <svg width="12" height="12" viewBox="0 0 12 12" className="block ml-[14px] mr-[8px]"><path d="M1 1L11 11M11 1L1 11" stroke="#fff" strokeWidth="1.7" /></svg>
      </div>
      <div className="h-[40px] shrink-0 flex items-center pl-[10px] text-[13px] text-[#333]">
        <svg width="23" height="24" viewBox="0 0 20 22" fill="none" className="block"><path d="M4 1H8V7L9 12V21H1V12L3 7ZM12 1H16L17 7L19 12V21H11V12L12 7ZM9 12H11M1 16H9M11 16H19" stroke="#444" /></svg>
        <span className="ml-[3px]">查找</span>
        <div className="ml-[6px] w-[509px] h-[25px] bg-white border border-[#a0a0a0]" />
      </div>
      <div className="flex h-[658px] shrink-0">
        <TreeList />
        <div className="ml-[11px] w-[386px] h-[658px] bg-[#d8d8d8] border-r border-b border-[#b8b8b8] flex flex-col">
          <div className="mr-[2px] mt-[1px] h-[67px] bg-[#f0f0f0] border-b-2 border-[#ababab]">
            <SecHead label="重叠距离" h={25} />
            <div className="h-[37px] flex items-center pl-[9px] text-[13px] text-[#222]">
              重叠距离
              <div className="ml-auto mr-[9px] flex gap-[2px] items-center mt-[2px]">
                <NumBox v="0. 0000" />
                <Select v="mm" w={67} />
              </div>
            </div>
          </div>
          <div className="mt-[2px] mr-[2px] h-[554px] bg-[#f0f0f0] border-b-2 border-[#ababab] flex flex-col">
            <SecHead label="区域起点" />
            <div className="mt-[5px] flex items-center pl-[9px] pr-[9px] justify-between text-[13px] text-[#222]">
              默认区域起点
              <Select v="中点" w={152} />
            </div>
            <div className="mt-[2px] ml-[9px] mr-[9px] h-[425px] shrink-0 bg-[#dcdcdc] border border-[#b4b4b4] flex flex-col">
              <SecHead label="选择点" pl={8} />
              <div className="mt-[5px] h-[31px] flex items-center pl-[9px] pr-[8px] text-[13px] text-[#222]">
                <svg width="16" height="14" viewBox="0 0 16 14" fill="none" className="block"><path d="M1 7L6 12L15 1" stroke="#3cc85a" strokeWidth="2" /></svg>
                <span className="ml-[4px]">指定点</span>
                <div className="ml-auto flex items-center gap-[2px]">
                  <svg width="24" height="24" viewBox="0 0 24 24" fill="none" className="block"><rect x="0.5" y="0.5" width="23" height="23" stroke="#777" /><circle cx="8" cy="8" r="2" fill="#d6782a" /><path d="M6 18H8M11 18H13M16 18H18" stroke="#333" /></svg>
                  <svg width="49" height="31" viewBox="0 0 49 31" fill="none" className="block"><rect x="0.5" y="0.5" width="48" height="30" stroke="#777" /><path d="M31.5 0V31" stroke="#777" /><path d="M8 24Q11 12 25 4" stroke="#333" /><circle cx="10" cy="20" r="2.5" fill="#d6782a" /><path d="M37 14H43L40 17Z" fill="#222" /></svg>
                </div>
              </div>
              <div className="mt-[3px] h-[24px] flex items-center pl-[8px] pr-[8px] justify-between text-[13px] text-[#222]">
                添加新集
                <svg width="24" height="24" viewBox="0 0 24 24" fill="none" className="block"><rect x="0.5" y="0.5" width="23" height="23" stroke="#777" /><circle cx="12" cy="12" r="7" fill="#fff" stroke="#222" /><path d="M7 12H17M12 7V17" stroke="#222" /></svg>
              </div>
              <div className="mt-[3px] mx-[9px] h-[324px] shrink-0 bg-[#f0f0f0] border-t border-[#cfcfcf]">
                <SecHead label="列表" h={22} pl={8} />
                <div className="mt-[8px] ml-[9px] flex">
                  <div className="w-[302px] h-[284px] border border-[#a6a6a6] bg-[#fafafa] overflow-hidden pr-[2px]">
                    {table.map((r, i) => (
                      <div key={i} className={"h-[22px] flex text-[14px] leading-[22px] text-[#333] border-b border-[#e6e6e6] " + (i === 9 ? "bg-[#88bdd0] ml-[1px]" : i % 2 ? "bg-[#f5f5f5]" : "bg-[#fbfbfb]")}>
                        <div className="w-[73px] pl-[10px] text-center border-r border-[#e0e0e0]">{r[0]}</div>
                        <div className="w-[72px] pl-[10px] text-center border-r border-[#e0e0e0]">{r[1]}</div>
                        <div className="w-[72px] pl-[12px] text-center border-r border-[#e0e0e0]">{r[0] ? "52.0000" : ""}</div>
                        <div className="flex-1" />
                      </div>
                    ))}
                  </div>
                  <div className="ml-[1px] flex flex-col gap-[2px]">
                    <svg width="24" height="24" viewBox="0 0 24 24" fill="none" className="block"><rect x="0.5" y="0.5" width="23" height="23" stroke="#888" /><path d="M5 5L19 19M19 5L5 19" stroke="#444" /></svg>
                    <svg width="24" height="24" viewBox="0 0 24 24" fill="none" className="block"><rect x="0.5" y="0.5" width="23" height="23" stroke="#888" /><path d="M12 5L19 13H15V19H9V13H5Z" stroke="#444" /></svg>
                    <svg width="24" height="24" viewBox="0 0 24 24" fill="none" className="block"><rect x="0.5" y="0.5" width="23" height="23" stroke="#ccc" /><path d="M12 19L19 11H15V5H9V11H5Z" stroke="#bbb" /></svg>
                  </div>
                </div>
              </div>
            </div>
            <div className="mt-[3px] flex items-center pl-[9px] pr-[9px] justify-between text-[13px] text-[#222]">
              有效距离
              <Select v="指定" w={152} />
            </div>
            <div className="mt-[3px] flex items-center pl-[9px] pr-[9px] justify-between text-[13px] text-[#222]">
              距离
              <div className="flex gap-[2px] items-center">
                <NumBox v="500. 0000" />
                <Select v="%刀具直径" w={67} />
              </div>
            </div>
          </div>
          <div className="mt-[1px] mr-[2px] h-[26px] bg-[#f0f0f0] border-b-2 border-[#ababab]">
            <SecHead label="预钻点" h={25} pl={10} open={false} gap={11} />
          </div>
        </div>
      </div>
      <div className="mt-[2px] ml-[10px] w-[567px] h-[71px] shrink-0 bg-[#f0f0f0] border-b border-[#a0a0a0] flex flex-col">
        <SecHead label="操作" h={24} pl={7} gap={8} />
        <div className="mt-[7px] flex items-center pl-[216px]">
          {[0, 1, 2, 3].map((i) => (
            <svg key={i} width="32" height="32" viewBox="0 0 32 32" fill="none" className="block mr-[2px]">
              <rect x="0.5" y="0.5" width="31" height="31" stroke="#777" />
              {i < 2 && <Tp x={3} y={3} c="#333" k={0.8} />}
              {i === 0 && <path d="M14 21Q15 16 20 16Q24 16 26 19M27 23Q25 28 20 28Q16 28 14 25" stroke="#333" />}
              {i === 1 && <path d="M25 20Q24 15 20 15Q14 15 14 22Q14 28 20 28Q26 28 27 23M25 15V20H21" stroke="#333" />}
              {i === 2 && <g><path d="M4 12L14 6L25 12V24L15 29L4 24Z" fill="#ccc" stroke="#666" /><rect x="13" y="3" width="7" height="14" fill="#d6782a" /><circle cx="22" cy="22" r="6" fill="#fff" stroke="#333" /><path d="M19 22L21 25L25 19" stroke="#333" /></g>}
              {i === 3 && <g><path d="M5 3H16L22 9V27H5Z" stroke="#333" /><Tp x={7} y={6} c="#333" k={0.7} /><path d="M14 21H28M25 17L29 21L25 25" stroke="#333" fill="#f0f0f0" /></g>}
            </svg>
          ))}
          <div className="ml-[172px] w-[34px] h-[32px] bg-[#ffd873] flex items-center justify-center">
            <svg width="26" height="26" viewBox="0 0 26 26" fill="none" className="block">
              <Tp x={1} y={1} c="#333" k={0.8} />
              <circle cx="17" cy="9" r="4.5" stroke="#c97b25" />
              <path d="M11 9H24M17 3V15" stroke="#8a5a20" />
            </svg>
          </div>
        </div>
      </div>
      <div className="mx-[6px] h-[21px] shrink-0 border-b border-[#bcbcbc] flex items-center justify-center">
        <span className="w-0 h-0 border-x-[5px] border-x-transparent border-b-[5px] border-b-[#111]" />
      </div>
      <div className="flex-1 flex justify-end items-start pt-[9px] pr-[16px] gap-[5px] text-[13px]">
        <div className="w-[56px] h-[27px] bg-[#006a94] text-white flex items-center justify-center">确定</div>
        <div className="w-[56px] h-[27px] border border-[#116d92] text-[#1a6e8e] flex items-center justify-center">取消</div>
      </div>
    </div>
  );
}

/* ---------- Viewport ---------- */
function Cone({ x, y, top, rot = 0 }: any) {
  const chev = [34, 38, 42, 46, 50, 54];
  const low = [69, 73, 77, 81, 85];
  return (
    <g transform={`translate(${x} ${y})`}>
      <path d="M0 -34C22 -34 36 -20 38 -3C52 10 62 28 62 45C62 72 36 93 5 93C-28 93 -52 72 -52 45C-52 25 -45 8 -36 -5C-36 -20 -22 -34 0 -34Z" fill="#00ffff" />
      <g transform={`rotate(${rot} 4 70)`}>
        {low.map((l, i) => (
          <path key={i} d={`M${-26 + i * 5} ${l - 6}L${-8 + i * 2} ${l}L${16 - i * 2} ${l}L${34 - i * 5} ${l - 7}`} stroke="#0c5c70" strokeWidth="0.55" fill="none" />
        ))}
      </g>
      <path d="M-36 82Q4 104 44 80M-42 74Q4 106 50 70" stroke="#d8ffff" strokeWidth="0.7" fill="none" />
      <path d="M-41 50Q-36 78 4 84Q40 82 50 45" stroke="#0a6a70" strokeDasharray="1 2.5" strokeWidth="0.8" fill="none" />
      <path d="M-36 56Q-28 70 -14 76M44 54Q38 68 24 76" stroke="#0a6a70" strokeDasharray="1 2" strokeWidth="0.8" fill="none" />
      <path d="M-44 8Q-49 16 -45 26M46 6Q54 14 52 28" stroke="#cfe6ff" strokeWidth="2" fill="none" />
      <path d="M-40 14L-44 30C-42 50 -24 69 3 69C28 69 48 50 52 26L46 12Z" fill="#6f7f9e" />
      <path d="M-37 26C-34 47 -18 62 3 62C24 62 40 44 42 24C44 5 30 -20 0 -20C-26 -20 -39 4 -37 26Z" fill="#00ffff" />
      <path d="M-37 26C-34 47 -18 62 3 62C24 62 40 44 42 24" stroke="#111" strokeWidth="0.7" fill="none" />
      <g transform={`rotate(${rot} 3 42)`}>
        {chev.map((c, i) => (
          <path key={c} d={`M${-15 + i} ${c + 10}L3 ${c}L${21 - i} ${c + 10}`} stroke="#0b6470" strokeWidth="0.55" strokeDasharray={i % 2 ? "" : "3 1"} fill="none" />
        ))}
      </g>
      <path d="M-31 32Q-22 46 -8 54M36 26Q28 46 14 55M-28 26Q-20 40 -10 46M31 24Q26 38 14 47" stroke="#0a5a60" strokeDasharray="1 2.5" strokeWidth="0.8" fill="none" />
      <path d="M-30 0L-31 13C-25 28 -12 33 2 33C20 33 33 22 36 3L30 -6Z" fill="#6f7f9e" />
      {top ? (
        <path d={top} fill="#b8d6ff" stroke="#111" strokeWidth="1" />
      ) : (
        <ellipse cx="0" cy="0" rx="29.5" ry="26.5" fill="#b8d6ff" stroke="#111" strokeWidth="1" />
      )}
    </g>
  );
}

const coneList: any[] = [
  { x: 1133, y: 323, rot: -30 },
  { x: 1305, y: 343, rot: -30 },
  { x: 1427, y: 449 },
  { x: 1452, y: 599, top: "M-5 -25C5 -28 28 -22 29 0C29 16 14 26 0 26C-8 26 -13 24 -15 21C-15 15 -16 12 -20 10C-24 7 -27 8 -30 4V-8L-24 -12C-18 -13 -11 -15 -5 -25Z" },
  { x: 1370, y: 735 },
  { x: 1214, y: 807, top: "M-6 -23C-2 -28 4 -28 8 -22C10 -17 14 -15 22 -14C28 -10 30 -5 30 0C30 16 14 26 0 26C-16 26 -29 14 -29 -3C-28 -7 -25 -9 -22 -10C-16 -13 -12 -16 -6 -23Z" },
  { x: 1042, y: 786 },
  { x: 919, y: 680 },
  { x: 894, y: 530 },
  { x: 975, y: 394, rot: -30, top: "M0 -26C15 -26 27 -15 29 0C30 8 28 12 24 14L20 17C14 22 10 21 7 19C3 17 -4 17 -7 20C-12 22 -17 21 -20 17C-26 10 -29 6 -29 0C-29 -15 -16 -26 0 -26Z" },
];

const balls = [[1142, 346], [1301, 368], [1400, 458], [1424, 595], [1348, 719], [1209, 782], [1056, 763], [940, 661], [924, 530], [995, 412]];
const greens = [
  "1136,355 1148,355 1148,383 1138,383", "1142,390 1154,390 1156,415 1145,415",
  "1289,375 1301,375 1302,403 1291,403", "1290,412 1303,412 1303,438 1290,438",
  "1389,453 1391,453 1390,483 1387,483", "1380,487 1381,490 1379,510 1376,505",
  "1417,587 1420,588 1418,607 1415,603", "1346,711 1352,713 1346,723 1342,718",
  "1208,776 1221,776 1221,780 1216,783", "1060,758 1065,762 1075,783 1070,783",
  "945,657 950,662 968,690 963,692", "930,533 934,532 940,565 937,567", "947,555 952,560 957,585 954,585",
  "991,423 1002,420 1005,448 997,450", "1003,455 1014,452 1019,477 1009,480",
];
const reds = [
  "M1029 403L1096 364", "M1178 356L1280 358L1298 360", "M1283 377L1353 422", "M1353 422L1370 433",
  "M1365 438L1377 477", "M1377 477L1396 537L1410 578", "M1324 678L1218 743L1203 752", "M1060 733H1216",
  "M1081 723L945 633", "M966 620L957 587", "M954 517L962 495", "M968 480L982 447", "M934 510L938 540",
];
const blues = [
  "M945 633L948 653", "M971 647L976 685", "M966 620L971 647", "M1059 733L1060 753", "M1082 742L1087 780",
  "M1217 733L1221 773", "M1204 752L1207 773", "M1333 673L1337 717", "M1364 435L1370 490", "M1394 560L1401 617",
  "M1410 587L1411 595", "M952 523L954 553", "M935 520L937 543", "M1136 348L1147 335L1146 358", "M1283 377L1286 420", "M1301 370L1302 390",
];

function Viewport() {
  return (
    <div className="w-[1122px] shrink-0 flex flex-col relative z-10">
      <div className="h-[25px] shrink-0 bg-[#f0f0f0] border-b border-[#0e6a8e]" />
      <div className="flex-1 bg-[linear-gradient(180deg,#0050ae_0%,#003a80_30%,#00183a_52%,#000816_65%,#000_74%)]">
        <svg width="1122" height="816" viewBox="798 210 1122 816" fill="none" className="block overflow-visible">
          <defs>
            <linearGradient id="sd" x1="0" y1="0" x2="0" y2="1">
              <stop offset="0" stopColor="#6f80a0" />
              <stop offset="1" stopColor="#8a9ab8" />
            </linearGradient>
            <pattern id="gr" width="4" height="3" patternUnits="userSpaceOnUse" patternTransform="rotate(-25)">
              <rect width="4" height="3" fill="#18e024" />
              <path d="M0 2.5H4" stroke="#0a8a20" strokeWidth="0.6" />
            </pattern>
          </defs>
          <polygon points="874,244 1608,333 1483,975 798,891 798,632" fill="#b8d6ff" stroke="#0a1020" strokeWidth="1" />
          <polygon points="1608,333 1616,397 1489,1025 1483,975" fill="url(#sd)" stroke="#0a1020" strokeWidth="0.8" />
          <polygon points="798,891 1483,975 1489,1026 1387,1026 798,953" fill="#5c6880" stroke="#0a1020" strokeWidth="0.8" />
          {coneList.map((c, i) => <Cone key={i} {...c} />)}
          <path d="M998 375L1003 384L1006 400L997 410L998 393Z" fill="#6f7f9e" stroke="#111" strokeWidth="0.7" />
          {greens.map((p, i) => <polygon key={i} points={p} fill="url(#gr)" />)}
          <g stroke="#c8304a" strokeWidth="1.1" strokeDasharray="8 10" fill="none">
            {reds.map((d, i) => <path key={i} d={d} />)}
          </g>
          <g stroke="#1424c0" strokeWidth="1.1" strokeDasharray="8 8" fill="none">
            {blues.map((d, i) => <path key={i} d={d} />)}
          </g>
          {balls.map(([x, y], i) => <circle key={i} cx={x} cy={y} r="4.5" fill="#a89868" />)}
          <circle cx="1144" cy="419" r="4.5" fill="#f2994a" />
          <polygon points="1181,523 1173,564 1221,570" stroke="#808890" fill="none" />
          <path d="M798 892L831 896" stroke="#c62828" />
          <path d="M830 892L851 898L830 899Z" fill="#c62828" />
          <text x="836" y="913" fontSize="11" fill="#c45a5a" fontFamily="Liberation Sans">XM</text>
          {/* watermark */}
          <polygon points="1673,950 1708,970 1708,1010 1673,1030 1638,1010 1638,970" fill="#1c5f86" />
          <polygon points="1673,950 1708,970 1708,985 1688,968 1650,963" fill="#5c7d92" />
          <polygon points="1638,970 1650,963 1672,968 1653,975 1642,1000 1638,1010" fill="#3a6f8e" />
          <polygon points="1638,1010 1642,1000 1656,1016 1673,1030" fill="#256a90" />
          <polygon points="1655,1003 1708,1010 1673,1026 1660,1018" fill="#04588a" />
          <polygon points="1673,1026 1683,1025 1673,1030 1663,1025" fill="#58b8e8" />
          <g stroke="#000" strokeWidth="1" fill="none">
            <path d="M1650 963Q1688 966 1708 985M1642 1000Q1646 976 1672 968M1656 1016Q1652 1008 1655 1003M1690 968Q1700 1000 1674 1013" />
          </g>
          <polygon points="1673,968 1692,979 1692,1001 1673,1012 1654,1001 1654,979" fill="#000" />
          <polygon points="1673,973 1688,981 1673,990 1658,981" fill="#5e8095" />
          <polygon points="1658,983 1672,991 1672,1007 1658,999" fill="#2f6f90" />
          <polygon points="1674,991 1688,983 1688,999 1674,1007" fill="#044e78" />
          <text x="1716" y="999" fontSize="46" fontWeight="700" fontFamily="Liberation Sans" fill="#7b7b7b" textLength="66" lengthAdjust="spacingAndGlyphs">3D</text>
          <text x="1784" y="997" fontSize="37" fontWeight="700" fontFamily="Noto Sans CJK SC" fill="#7b7b7b">世界网</text>
          <text x="1719" y="1018" fontSize="13" fontWeight="700" fontFamily="Liberation Sans" fill="#6f6f6f" letterSpacing="1.5" textLength="174" lengthAdjust="spacingAndGlyphs">WWW.3DSJW.COM</text>
        </svg>
      </div>
    </div>
  );
}

export default function App() {
  return (
    <div className="relative w-[1920px] h-[1044px] overflow-hidden flex flex-col bg-[#f0f0f0] font-['Noto_Sans_CJK_SC','Open_Sans',sans-serif]">
      <TitleBar />
      <Ribbon />
      <Toolbar />
      <div className="flex h-[842px] shrink-0">
        <Rail />
        <Navigator />
        <Viewport />
      </div>
      <div className="h-[18px] shrink-0 bg-[#f0f0f0] border-t-2 border-[#aaa] text-[13px] leading-[16px] pl-[3px] text-[#222] relative">指定参数或选择路径</div>
      <Dialog />
    </div>
  );
}
